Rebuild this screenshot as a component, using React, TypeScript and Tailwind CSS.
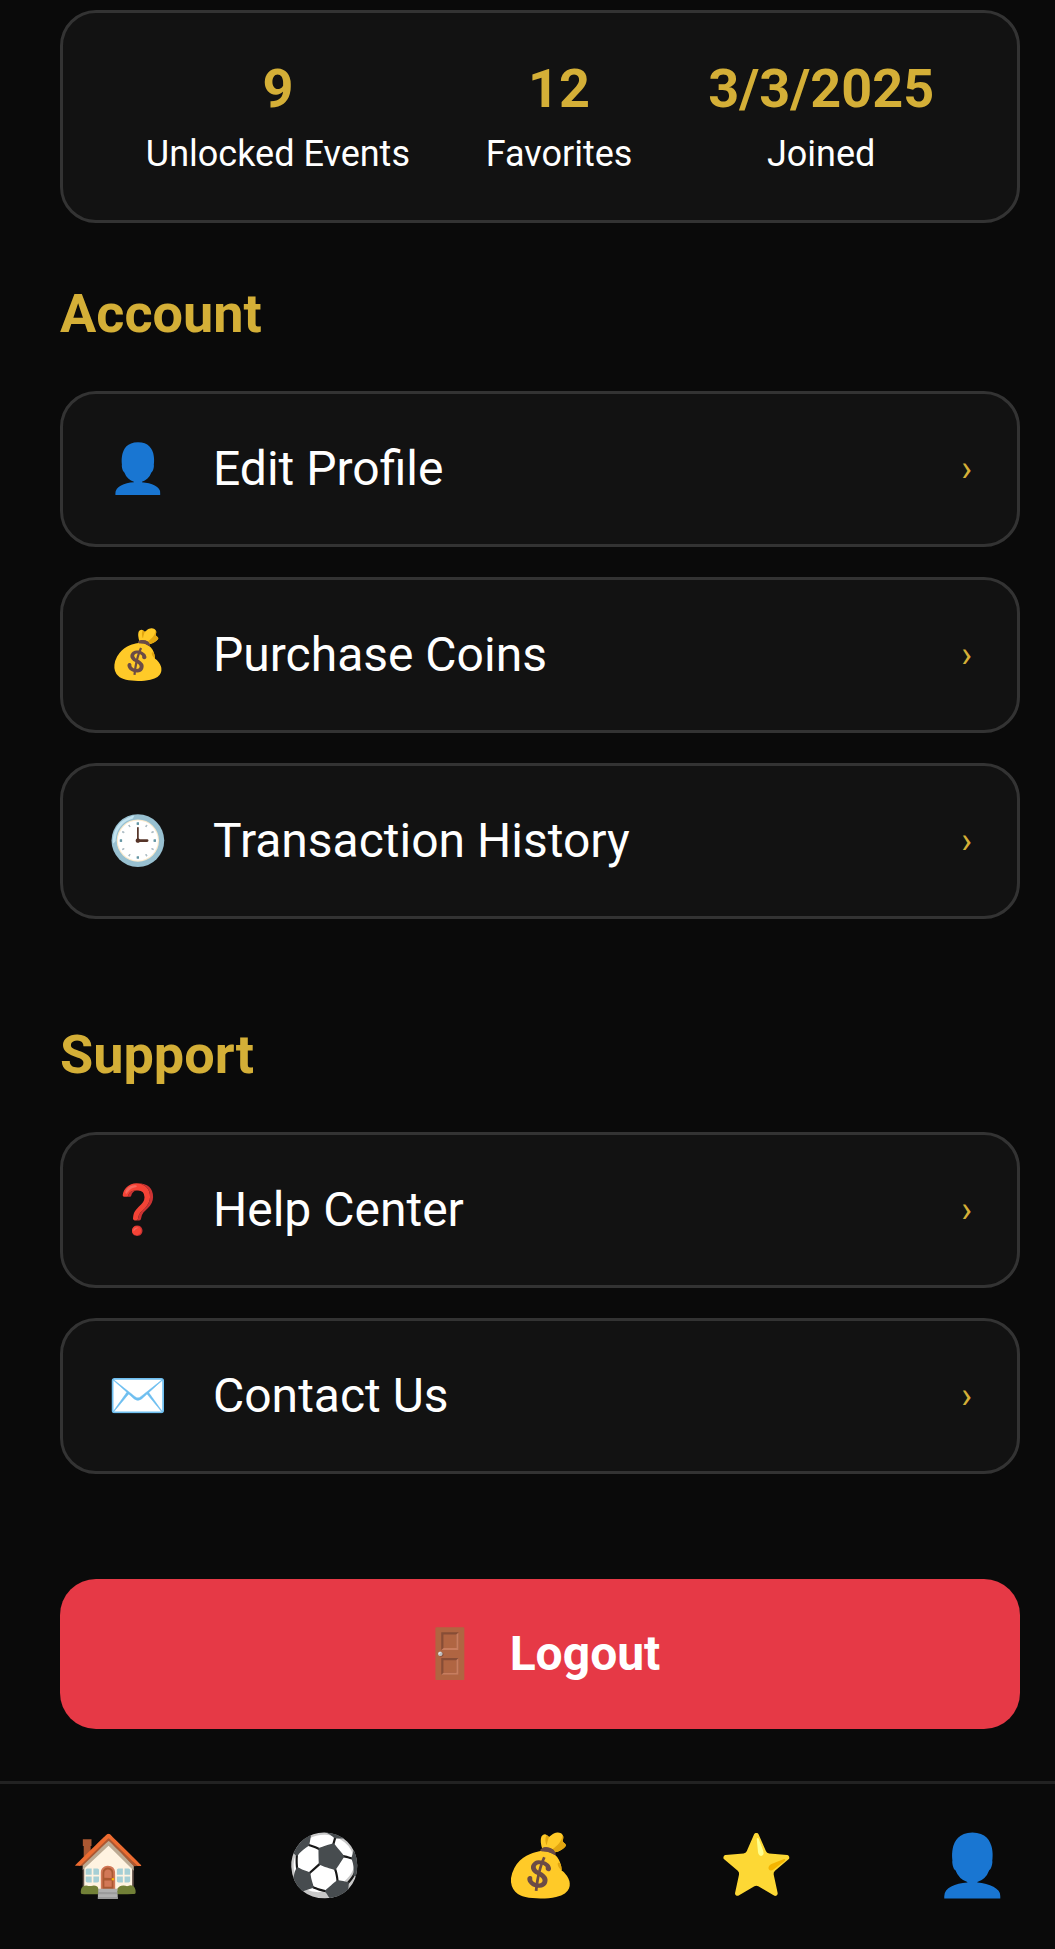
interface MenuItem {
  icon: string
  label: string
}

const stats = [
  { value: '9', label: 'Unlocked Events' },
  { value: '12', label: 'Favorites' },
  { value: '3/3/2025', label: 'Joined' },
]

const accountItems: MenuItem[] = [
  { icon: '👤', label: 'Edit Profile' },
  { icon: '💰', label: 'Purchase Coins' },
  { icon: '🕒', label: 'Transaction History' },
]

const supportItems: MenuItem[] = [
  { icon: '❓', label: 'Help Center' },
  { icon: '✉️', label: 'Contact Us' },
]

const tabs = [
  { icon: '🏠', label: 'Home' },
  { icon: '⚽', label: 'Matches' },
  { icon: '💰', label: 'Coins' },
  { icon: '⭐', label: 'Favorites' },
  { icon: '👤', label: 'Profile' },
]

function MenuSection({ title, items }: { title: string; items: MenuItem[] }) {
  return (
    <section className="mb-[105px]">
      <h2 className="mb-[47px] text-[54px] leading-[61px] font-bold text-[#d4af37]">{title}</h2>
      <ul className="flex flex-col gap-[30px]">
        {items.map((item) => (
          <li key={item.label}>
            <button
              type="button"
              className="flex w-full items-center rounded-[36px] border-3 border-[#333] bg-[#121212] px-[45px] py-[47px] text-left text-[48px] leading-[56px]"
            >
              <span className="mr-[45px] w-[60px] text-center" aria-hidden="true">{item.icon}</span>
              <span className="flex-1">{item.label}</span>
              <span className="text-[36px] leading-[42px] text-[#d4af37]" aria-hidden="true">›</span>
            </button>
          </li>
        ))}
      </ul>
    </section>
  )
}

export default function App() {
  return (
    <div className="min-h-screen overflow-x-hidden bg-[#0a0a0a] font-[Roboto,sans-serif] text-white">
      {/* the screen runs slightly past the right edge of the window */}
      <div className="flex min-h-screen w-[calc(100%+25px)] flex-col">
        <main className="flex-1 px-[60px] pt-[10px] pb-[52px]">
          <div className="mb-[60px] flex justify-around rounded-[36px] border-3 border-[#333] bg-[#121212] p-[45px] text-center">
            {stats.map((stat) => (
              <div key={stat.label}>
                <div className="mb-[14px] text-[54px] leading-[61px] font-bold text-[#d4af37]">{stat.value}</div>
                <div className="text-[36px] leading-[42px]">{stat.label}</div>
              </div>
            ))}
          </div>

          <MenuSection title="Account" items={accountItems} />
          <MenuSection title="Support" items={supportItems} />

          <button
            type="button"
            className="flex w-full items-center justify-center gap-[30px] rounded-[36px] bg-[#e63946] py-[47px] text-[48px] leading-[56px] font-bold"
          >
            <span className="w-[60px] text-center" aria-hidden="true">🚪</span>
            <span>Logout</span>
          </button>
        </main>

        <nav className="grid grid-cols-5 border-t-3 border-[#222]">
          {tabs.map((tab) => (
            <a key={tab.label} href="#" aria-label={tab.label} className="pt-[46px] pb-[48px] text-center text-[60px] leading-[71px]">
              {tab.icon}
            </a>
          ))}
        </nav>
      </div>
    </div>
  )
}
